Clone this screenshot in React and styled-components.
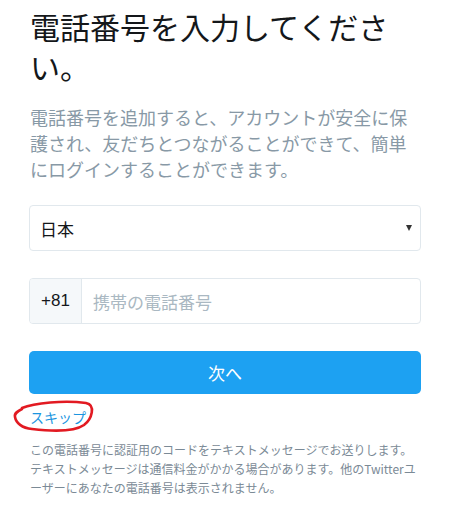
import React from "react";
import styled, { createGlobalStyle } from "styled-components";

const Global = createGlobalStyle`
  html, body { margin: 0; padding: 0; background: #fff; }
  body { font-family: "Noto Sans CJK JP", "Noto Sans", sans-serif; }
`;

const Page = styled.div`
  width: 392px;
  margin-left: 29px;
  padding-top: 6px;
  display: flex;
  flex-direction: column;
`;

const Title = styled.h1`
  margin: 0;
  padding-left: 1px;
  font-size: 30px;
  line-height: 40px;
  font-weight: 400;
  color: #14171a;
`;

const Lead = styled.p`
  margin: 18px 0 0;
  padding-left: 1px;
  font-size: 18px;
  line-height: 26px;
  color: #8899a6;
`;

const SelectBox = styled.div`
  margin-top: 23px;
  height: 46px;
  box-sizing: border-box;
  border: 1px solid #e1e8ed;
  border-radius: 4px;
  display: flex;
  align-items: center;
  justify-content: space-between;
  padding: 0 8px 0 10px;
  font-size: 17px;
  color: #14171a;
`;

const Arrow = styled.span`
  width: 0;
  height: 0;
  border-left: 3.5px solid transparent;
  border-right: 3.5px solid transparent;
  border-top: 6px solid #333;
`;

const PhoneRow = styled.div`
  margin-top: 27px;
  height: 46px;
  box-sizing: border-box;
  border: 1px solid #e1e8ed;
  border-radius: 4px;
  display: flex;
  overflow: hidden;
`;

const Prefix = styled.div`
  width: 51px;
  background: #f5f8fa;
  border-right: 1px solid #e1e8ed;
  display: flex;
  align-items: center;
  justify-content: center;
  font-family: "Liberation Sans", Arial, sans-serif;
  font-size: 17px;
  color: #14171a;
`;

const Placeholder = styled.div`
  flex: 1;
  display: flex;
  align-items: center;
  padding-left: 11px;
  font-size: 17px;
  color: #aab8c2;
`;

const Button = styled.button`
  margin-top: 27px;
  height: 43px;
  border: none;
  border-radius: 5px;
  background: #1da1f2;
  color: #fff;
  font-family: "Noto Sans CJK JP", sans-serif;
  font-size: 17px;
  padding: 0;
`;

const SkipWrap = styled.div`
  position: relative;
  margin-top: 13px;
  height: 20px;
  display: flex;
  align-items: center;
`;

const Skip = styled.a`
  padding-left: 1px;
  font-size: 14px;
  line-height: 20px;
  color: #1b95e0;
  text-decoration: none;
`;

const Mark = styled.svg`
  position: absolute;
  left: -15px;
  top: -8px;
  overflow: visible;
`;

const Note = styled.p`
  margin: 13px 0 0;
  padding-left: 1px;
  font-size: 12px;
  line-height: 19px;
  color: #7b8a96;
  width: 390px;
`;

export default function App() {
  return (
    <>
      <Global />
      <Page>
        <Title>電話番号を入力してください。</Title>
        <Lead>
          電話番号を追加すると、アカウントが安全に保護され、友だちとつながることができて、簡単にログインすることができます。
        </Lead>
        <SelectBox>
          <span>日本</span>
          <Arrow />
        </SelectBox>
        <PhoneRow>
          <Prefix>+81</Prefix>
          <Placeholder>携帯の電話番号</Placeholder>
        </PhoneRow>
        <Button>次へ</Button>
        <SkipWrap>
          <Skip href="#">スキップ</Skip>
          <Mark width="80" height="34" viewBox="0 0 80 34">
            <path
              d="M8 9 C 20 4, 50 1, 72 4 C 82 6, 78 20, 70 26 C 60 33, 35 32, 18 30 C 8 29, 2 24, 1 18 C 0 14, 4 12, 8 10"
              fill="none"
              stroke="#e21a22"
              strokeWidth="2.6"
              strokeLinecap="round"
            />
          </Mark>
        </SkipWrap>
        <Note>
          この電話番号に認証用のコードをテキストメッセージでお送りします。テキストメッセージは通信料金がかかる場合があります。他のTwitterユーザーにあなたの電話番号は表示されません。
        </Note>
      </Page>
    </>
  );
}
